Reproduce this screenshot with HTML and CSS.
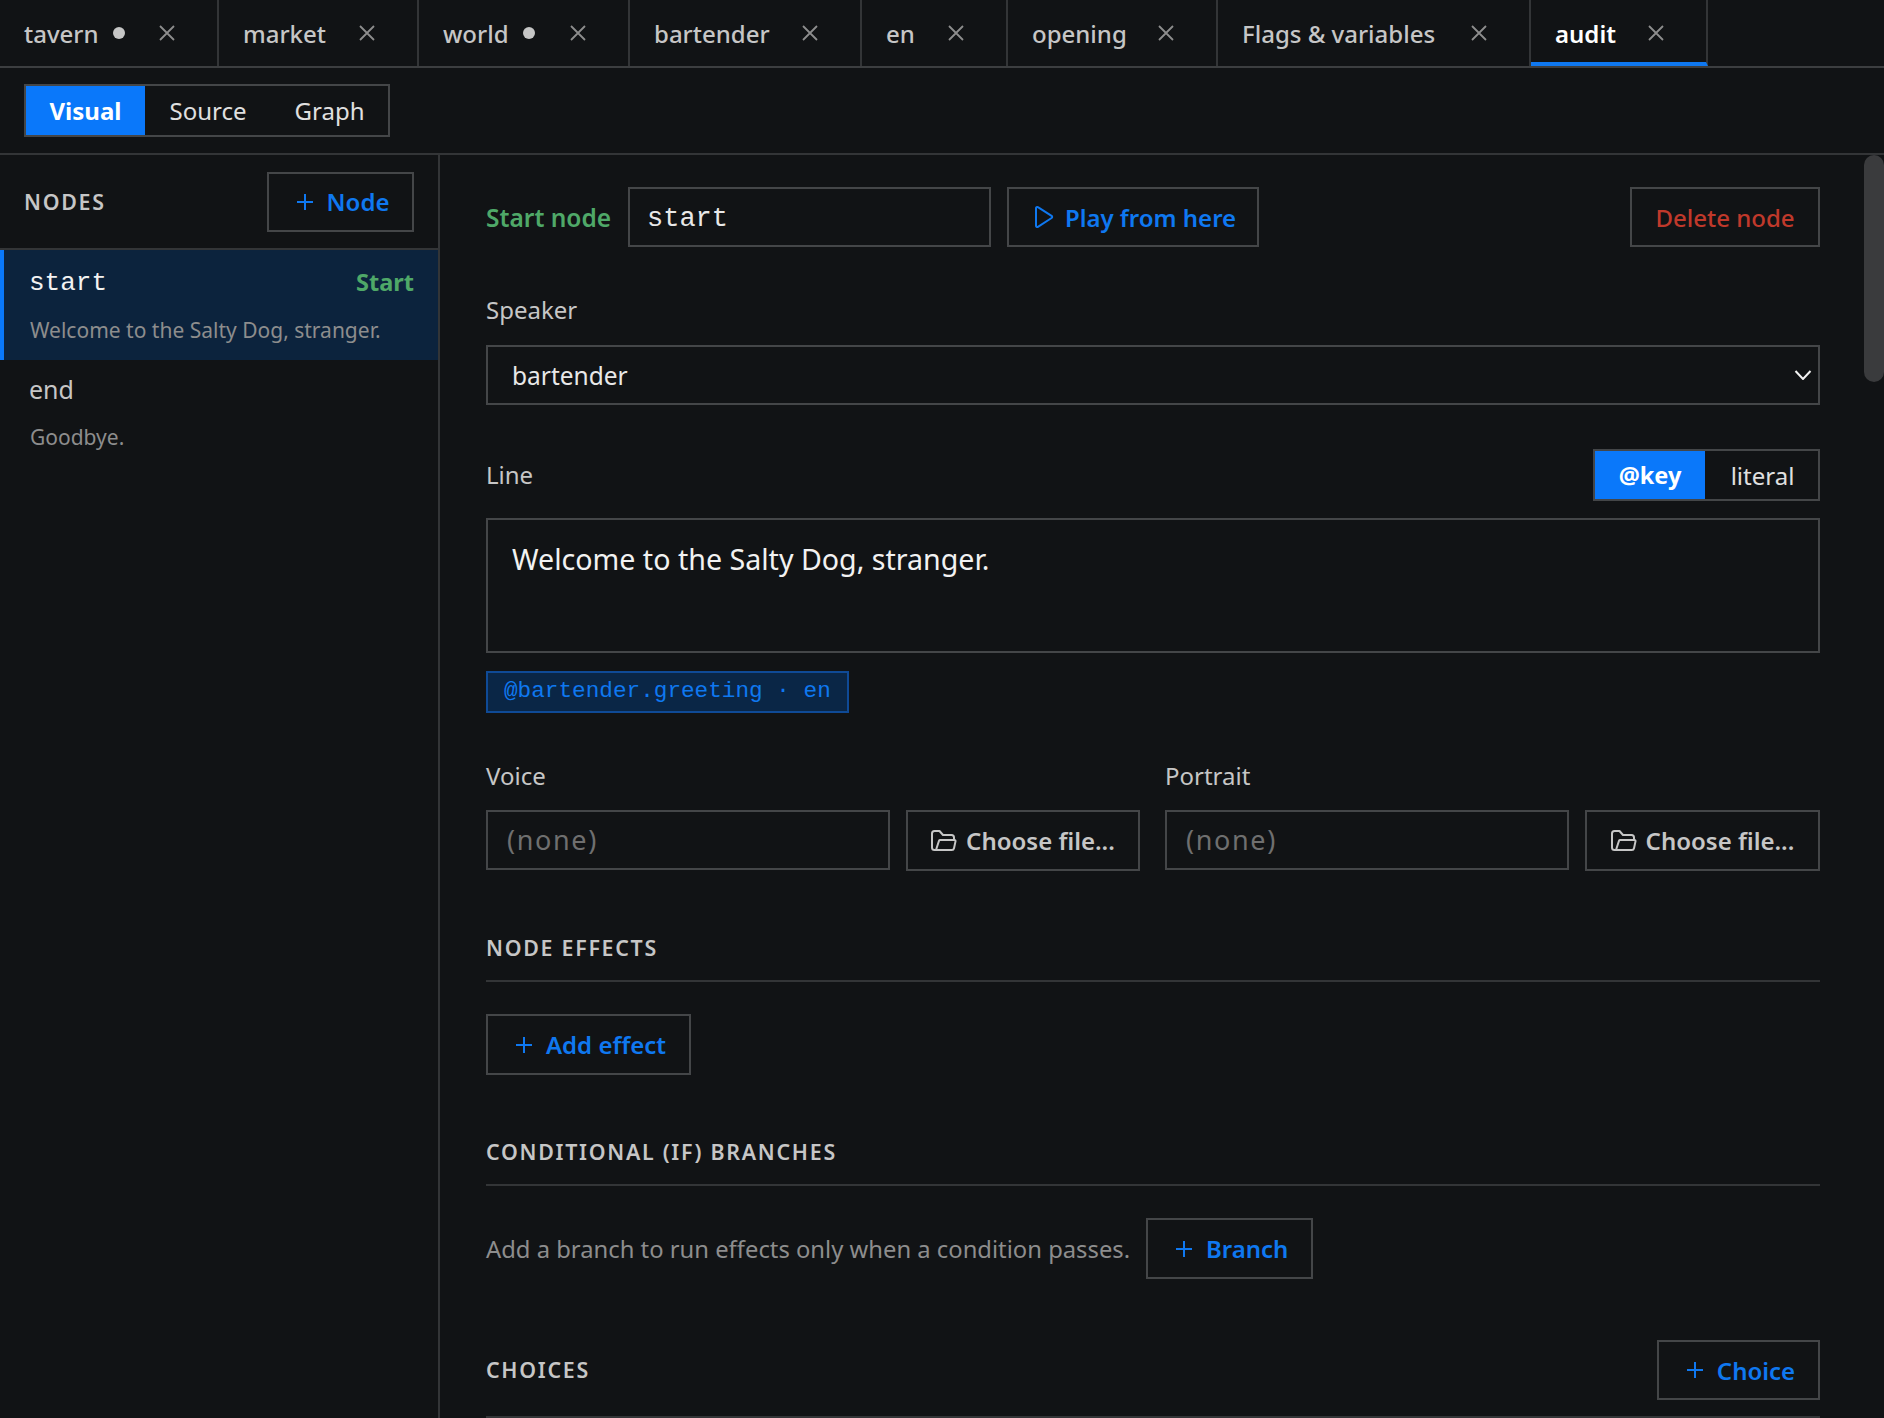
FILE: index.html
```html
<!DOCTYPE html>
<html lang="en">
<head>
    <meta charset="UTF-8">
    <meta name="viewport" content="width=device-width, initial-scale=1.0">
    <title>Dialogue editor</title>
    <link rel="stylesheet" href="styles.css">
</head>
<body>

<div class="tab-bar">
    <div class="tab"><span>tavern</span><i class="dot"></i><svg class="close" viewBox="0 0 18 18"><path d="M2 2l14 14M16 2L2 16"/></svg></div>
    <div class="tab"><span>market</span><svg class="close" viewBox="0 0 18 18"><path d="M2 2l14 14M16 2L2 16"/></svg></div>
    <div class="tab"><span>world</span><i class="dot"></i><svg class="close" viewBox="0 0 18 18"><path d="M2 2l14 14M16 2L2 16"/></svg></div>
    <div class="tab"><span>bartender</span><svg class="close" viewBox="0 0 18 18"><path d="M2 2l14 14M16 2L2 16"/></svg></div>
    <div class="tab"><span>en</span><svg class="close" viewBox="0 0 18 18"><path d="M2 2l14 14M16 2L2 16"/></svg></div>
    <div class="tab"><span>opening</span><svg class="close" viewBox="0 0 18 18"><path d="M2 2l14 14M16 2L2 16"/></svg></div>
    <div class="tab"><span>Flags &amp; variables</span><svg class="close" viewBox="0 0 18 18"><path d="M2 2l14 14M16 2L2 16"/></svg></div>
    <div class="tab tab-active"><span>audit</span><svg class="close" viewBox="0 0 18 18"><path d="M2 2l14 14M16 2L2 16"/></svg></div>
</div>

<div class="mode-bar">
    <div class="mode-switch">
        <button class="mode-on">Visual</button>
        <button>Source</button>
        <button>Graph</button>
    </div>
</div>

<div class="workspace">
    <aside class="sidebar">
        <div class="sidebar-head">
            <h2 class="caps">NODES</h2>
            <button class="btn btn-link btn-node"><svg class="plus" viewBox="0 0 18 18"><path d="M9 1v16M1 9h16"/></svg>Node</button>
        </div>
        <div class="node-row node-selected">
            <div class="node-top"><span class="node-name">start</span><span class="node-badge">Start</span></div>
            <div class="node-text">Welcome to the Salty Dog, stranger.</div>
        </div>
        <div class="node-row">
            <div class="node-top"><span class="node-name node-name-plain">end</span></div>
            <div class="node-text">Goodbye.</div>
        </div>
    </aside>

    <main class="editor">
        <div class="start-row">
            <label class="start-label">Start node</label>
            <input class="field field-mono start-input" value="start">
            <button class="btn btn-link btn-play"><svg class="play" viewBox="0 0 20 24"><path d="M2 3.200v17.600c0 1 1 1.600 1.900 1L17.600 13c.8-.5.8-1.600 0-2.100L3.900 2.200C3 1.600 2 2.200 2 3.200z"/></svg>Play from here</button>
            <button class="btn btn-danger">Delete node</button>
        </div>

        <div class="label">Speaker</div>
        <div class="select-wrap">
            <select class="field select"><option>bartender</option></select>
            <svg class="chevron" viewBox="0 0 18 10"><path d="M1.500 1L9 9l7.500-8"/></svg>
        </div>

        <div class="line-head">
            <div class="label-inline">Line</div>
            <div class="line-switch">
                <button class="mode-on">@key</button>
                <button>literal</button>
            </div>
        </div>
        <textarea class="field line-area">Welcome to the Salty Dog, stranger.</textarea>
        <div class="key-chip">@bartender.greeting · en</div>

        <div class="file-grid">
            <div>
                <div class="label">Voice</div>
                <div class="file-row">
                    <input class="field file-input" placeholder="(none)">
                    <button class="btn btn-file"><svg class="folder" viewBox="0 0 26 24"><path d="M5 21l3-9.200c.2-.5.6-.8 1.100-.8h14.300c.8 0 1.300.7 1.100 1.400l-1.500 6.800c-.2 1-1 1.800-2.100 1.800H3.500C2.100 21 1 19.900 1 18.500V4.500C1 3.100 2.100 2 3.500 2h5l3.500 4h8.500C21.900 6 23 7.100 23 8.500V11"/></svg>Choose file...</button>
                </div>
            </div>
            <div>
                <div class="label">Portrait</div>
                <div class="file-row">
                    <input class="field file-input" placeholder="(none)">
                    <button class="btn btn-file"><svg class="folder" viewBox="0 0 26 24"><path d="M5 21l3-9.200c.2-.5.6-.8 1.100-.8h14.300c.8 0 1.300.7 1.100 1.400l-1.500 6.800c-.2 1-1 1.800-2.100 1.800H3.500C2.100 21 1 19.900 1 18.500V4.500C1 3.100 2.100 2 3.500 2h5l3.500 4h8.500C21.900 6 23 7.100 23 8.500V11"/></svg>Choose file...</button>
                </div>
            </div>
        </div>

        <h2 class="caps section-head">NODE EFFECTS</h2>
        <button class="btn btn-link btn-effect"><svg class="plus" viewBox="0 0 18 18"><path d="M9 1v16M1 9h16"/></svg>Add effect</button>

        <h2 class="caps section-head">CONDITIONAL (IF) BRANCHES</h2>
        <div class="branch-row">
            <span class="hint">Add a branch to run effects only when a condition passes.</span>
            <button class="btn btn-link btn-branch"><svg class="plus" viewBox="0 0 18 18"><path d="M9 1v16M1 9h16"/></svg>Branch</button>
        </div>

        <div class="choices-head">
            <h2 class="caps">CHOICES</h2>
            <button class="btn btn-link btn-choice"><svg class="plus" viewBox="0 0 18 18"><path d="M9 1v16M1 9h16"/></svg>Choice</button>
        </div>

        <div class="scroll-thumb"></div>
    </main>
</div>

</body>
</html>
```
FILE: styles.css
```css
* {
    box-sizing: border-box;
}

body {
    margin: 0;
    height: 1418px;
    overflow: hidden;
    background-color: #111315;
    color: #e8e8e8;
    font-family: "Noto Sans", "Liberation Sans", sans-serif;
    font-size: 24px;
}

button,
input,
select,
textarea {
    font-family: inherit;
    color: inherit;
}

/* tabs */
.tab-bar {
    display: grid;
    grid-template-columns: 219px 200px 211px 232px 146px 210px 313px 177px;
    height: 68px;
    border-bottom: 2px solid #3c3e40;
}

.tab {
    display: flex;
    align-items: center;
    gap: 14px;
    padding: 0 41px 0 24px;
    border-right: 2px solid #333537;
    color: #c6c6c6;
    font-weight: 500;
    height: 66px;
}

.tab-active {
    padding-top: 4px;
    color: #fff;
    font-weight: 600;
    border-bottom: 4px solid #0f78f0;
}

.dot {
    width: 12px;
    height: 12px;
    border-radius: 50%;
    background-color: #c6c6c6;
}

.close {
    width: 18px;
    height: 18px;
    margin-left: auto;
    fill: none;
    stroke: #8d8d8d;
    stroke-width: 1.800;
}

/* Visual / Source / Graph */
.mode-bar {
    height: 87px;
    padding: 16px 24px 0;
    border-bottom: 2px solid #333537;
}

.mode-switch {
    display: grid;
    grid-template-columns: 119px 126px 117px;
    width: 366px;
    height: 53px;
    border: 2px solid #444648;
}

.mode-switch button,
.line-switch button {
    border: none;
    padding: 0;
    background-color: transparent;
    color: #e0e0e0;
    font-size: 24px;
}

.mode-switch .mode-on,
.line-switch .mode-on {
    background-color: #0a78fa;
    color: #fff;
    font-weight: 700;
}

.workspace {
    display: flex;
    position: relative;
    height: 1263px;
}

/* left panel */
.sidebar {
    width: 440px;
    flex-shrink: 0;
    border-right: 2px solid #333537;
}

.sidebar-head {
    display: flex;
    justify-content: space-between;
    align-items: center;
    height: 95px;
    padding: 0 24px;
    border-bottom: 2px solid #333537;
}

.caps {
    margin: 0;
    font-size: 21.400px;
    font-weight: 600;
    letter-spacing: 0.08em;
    color: #c6c6c6;
}

.node-row {
    height: 110px;
    padding: 14px 24px 0 29px;
}

.node-selected {
    padding: 17px 24px 0 25px;
    background-color: #0c233d;
    border-left: 4px solid #0a78fa;
}

.node-top {
    display: flex;
    justify-content: space-between;
    align-items: center;
    height: 30px;
    margin-bottom: 18px;
}

.node-name {
    padding-top: 2px;
    font-family: "Liberation Mono", monospace;
    font-size: 26px;
    color: #f2f2f2;
}

.node-name-plain {
    padding-top: 0;
    font-family: inherit;
    font-size: 25px;
    color: #c6c6c6;
}

.node-badge {
    color: #4fa868;
    font-weight: 700;
    font-size: 23.500px;
}

.node-text {
    padding-left: 1px;
    line-height: 30px;
    font-size: 21px;
    color: #8d8d8d;
}

/* main editor */
.editor {
    flex: 1;
    padding: 32px 64px 0 46px;
}

.field {
    display: block;
    width: 100%;
    height: 60px;
    padding: 0 24px;
    border: 2px solid #444648;
    border-radius: 0;
    background-color: transparent;
    font-size: 24.500px;
    outline: none;
}

.field-mono {
    padding-top: 4px;
    font-family: "Liberation Mono", monospace;
    font-size: 27px;
}

.field::placeholder {
    color: #6f6f6f;
    opacity: 1;
    letter-spacing: 0.06em;
}

.btn {
    display: inline-flex;
    justify-content: center;
    align-items: center;
    gap: 13px;
    flex-shrink: 0;
    height: 61px;
    padding: 0;
    border: 2px solid #444648;
    background-color: transparent;
    font-size: 24px;
    font-weight: 600;
}

.btn-link {
    padding-left: 4px;
    color: #0f78f0;
}

.btn-danger {
    width: 190px;
    height: 60px;
    margin-left: auto;
    font-weight: 500;
    color: #c0392b;
}

.btn-node {
    width: 147px;
    height: 60px;
}

.btn-play {
    width: 252px;
    height: 60px;
    gap: 11px;
}

.btn-effect {
    width: 205px;
}

.btn-branch {
    width: 167px;
}

.btn-choice {
    width: 163px;
    height: 60px;
}

.btn-file {
    width: 100%;
    gap: 9px;
    color: #c6c6c6;
}

.plus {
    width: 18px;
    height: 18px;
    fill: none;
    stroke: currentColor;
    stroke-width: 2;
}

.play {
    width: 20px;
    height: 24px;
    fill: none;
    stroke: currentColor;
    stroke-width: 2;
}

.folder {
    width: 26px;
    height: 24px;
    fill: none;
    stroke: currentColor;
    stroke-width: 2;
    stroke-linejoin: round;
}

.start-row {
    display: flex;
    align-items: center;
    margin-bottom: 48px;
}

.start-label {
    width: 142px;
    flex-shrink: 0;
    color: #4fa868;
    font-weight: 600;
    font-size: 24.500px;
}

.start-input {
    width: 363px;
    margin-right: 16px;
    padding: 4px 17px 0;
}

.label {
    height: 30px;
    margin-bottom: 20px;
    line-height: 30px;
    color: #c6c6c6;
}

.label-inline {
    padding-bottom: 2px;
    color: #c6c6c6;
}

.select-wrap {
    position: relative;
    margin-bottom: 44px;
}

.select {
    appearance: none;
}

.chevron {
    position: absolute;
    top: 25px;
    right: 8px;
    width: 18px;
    height: 10px;
    fill: none;
    stroke: #f2f2f2;
    stroke-width: 2;
}

.line-head {
    display: flex;
    justify-content: space-between;
    align-items: center;
    height: 52px;
    margin-bottom: 17px;
}

.line-switch {
    display: grid;
    grid-template-columns: 110px 115px;
    width: 227px;
    height: 52px;
    border: 2px solid #444648;
}

.line-switch .mode-on {
    font-size: 23.500px;
}

.line-area {
    height: 135px;
    padding: 21px 24px;
    resize: none;
    font-size: 28.600px;
    line-height: 36px;
    color: #f2f2f2;
}

.key-chip {
    width: 363px;
    height: 42px;
    margin-top: 18px;
    padding-left: 16px;
    border: 2px solid #0f4a96;
    background-color: #0a2646;
    color: #0f78f0;
    font-family: "Liberation Mono", monospace;
    font-size: 22.700px;
    line-height: 36px;
}

.file-grid {
    display: grid;
    grid-template-columns: 654px 655px;
    column-gap: 25px;
    margin-top: 48px;
}

.file-grid .label {
    margin-bottom: 19px;
}

.file-row {
    display: grid;
    grid-template-columns: 404px 1fr;
    column-gap: 16px;
}

.file-input {
    padding: 0 19px 2px;
    font-size: 27px;
}

.section-head {
    height: 49px;
    margin-top: 62px;
    margin-bottom: 32px;
    line-height: 30px;
    border-bottom: 2px solid #333537;
}

.branch-row {
    display: flex;
    align-items: center;
    gap: 16px;
}

.hint {
    color: #8d8d8d;
    font-size: 23.800px;
}

.choices-head {
    display: flex;
    justify-content: space-between;
    align-items: flex-start;
    height: 78px;
    margin-top: 61px;
    border-bottom: 2px solid #333537;
}

.choices-head .caps {
    line-height: 60px;
}

.scroll-thumb {
    position: absolute;
    top: 0;
    right: 0;
    width: 20px;
    height: 227px;
    border-radius: 10px;
    background-color: #3a3b3d;
}
```
